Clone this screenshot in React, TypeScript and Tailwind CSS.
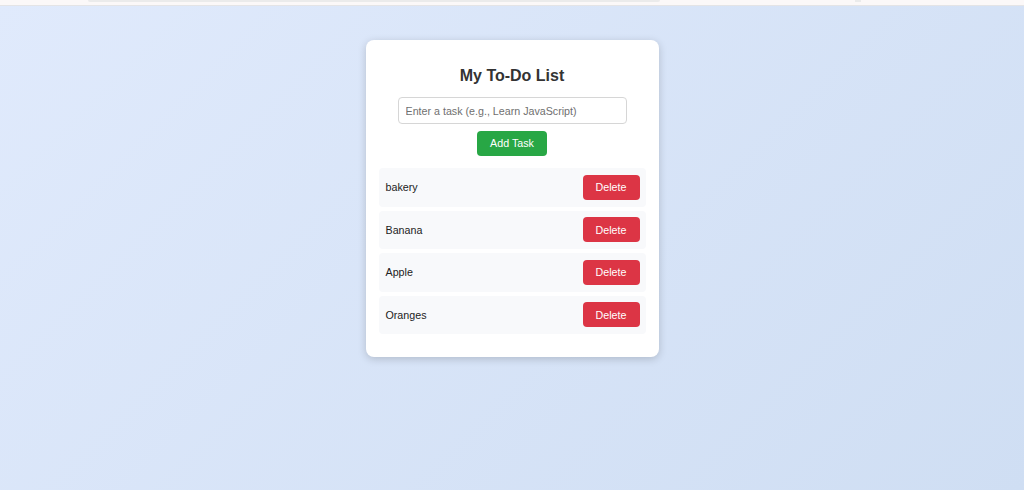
import { useState } from "react";

const initialTasks = ["bakery", "Banana", "Apple", "Oranges"];

export default function App() {
  const [tasks, setTasks] = useState<string[]>(initialTasks);
  const [text, setText] = useState("");

  const addTask = () => {
    const value = text.trim();
    if (!value) return;
    setTasks([...tasks, value]);
    setText("");
  };

  const removeTask = (index: number) => {
    setTasks(tasks.filter((_, i) => i !== index));
  };

  return (
    <div className="min-h-[490px] bg-[linear-gradient(135deg,#e0eafc,#cfdef3)] font-['Liberation_Sans',Arial,sans-serif]">
      {/* bit of browser chrome left at the top edge */}
      <div className="flex h-[6px] bg-[#fbf8f8] border-b border-[#e4e4e6]">
        <div className="ml-[88px] w-[572px] h-[2px] bg-[#ebebeb] rounded-b-sm" />
        <div className="ml-[195px] w-[6px] h-[2px] bg-[#ebebeb]" />
      </div>

      <div className="flex justify-center pt-[34px]">
        <div className="w-[293px] bg-white rounded-[8px] shadow-[0_2px_8px_rgba(0,0,0,0.18)] pt-[26px] pb-[23px] px-[13px]">
          <h2 className="text-center text-[16px] leading-[20px] font-bold text-[#333]">My To-Do List</h2>

          <div className="flex flex-col items-center mt-[11px]">
            <input
              type="text"
              value={text}
              onChange={(e) => setText(e.target.value)}
              placeholder="Enter a task (e.g., Learn JavaScript)"
              className="w-[229px] h-[27px] px-[7px] text-[10.7px] text-[#333] border border-[#d6d6d6] rounded-[4px] outline-none placeholder:text-[#6f6f6f]"
            />
            <button
              onClick={addTask}
              className="mt-[7px] w-[70px] h-[25px] bg-[#28a745] text-white text-[10.7px] rounded-[4px]"
            >
              Add Task
            </button>
          </div>

          <ul className="mt-[12px] flex flex-col gap-[4px]">
            {tasks.map((task, i) => (
              <li
                key={task + i}
                className="h-[38.5px] flex items-center justify-between pl-[7px] pr-[6px] bg-[#f8f9fb] rounded-[4px]"
              >
                <span className="text-[10.7px] text-[#222]">{task}</span>
                <button
                  onClick={() => removeTask(i)}
                  className="w-[57px] h-[25px] bg-[#dc3545] text-white text-[10.7px] rounded-[4px]"
                >
                  Delete
                </button>
              </li>
            ))}
          </ul>
        </div>
      </div>
    </div>
  );
}
